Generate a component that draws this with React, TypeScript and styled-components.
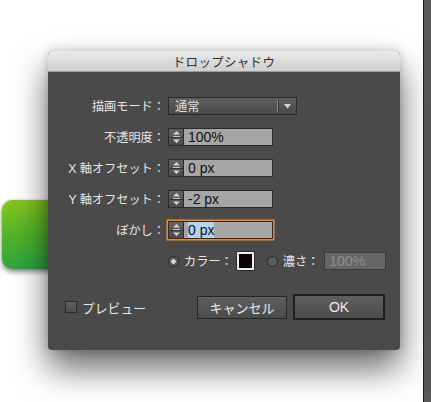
import React from "react";
import styled, { createGlobalStyle } from "styled-components";

const Global = createGlobalStyle`
  html, body { margin: 0; padding: 0; background: #ffffff; }
  body { font-family: "Liberation Sans", "Noto Sans CJK JP", sans-serif; }
`;

const Page = styled.div`
  width: 431px;
  height: 402px;
  display: flex;
  overflow: hidden;
  background: #ffffff;
`;

const Canvas = styled.div`
  position: relative;
  flex: 1;
  height: 100%;
`;

const SideBar = styled.div`
  width: 7px;
  height: 100%;
  border-left: 1px solid #1e1e1e;
  background: #575757;
`;

const GreenShape = styled.div`
  position: absolute;
  left: 2px;
  top: 200px;
  width: 80px;
  height: 69px;
  border-radius: 10px;
  background: linear-gradient(172deg, #86c818 0%, #55b42a 45%, #21a044 100%);
  box-shadow: 0 3px 5px rgba(0, 0, 0, 0.45), 0 0 2px rgba(0, 0, 0, 0.2);
`;

const Dialog = styled.div`
  position: absolute;
  left: 48px;
  top: 51px;
  width: 352px;
  height: 299px;
  display: flex;
  flex-direction: column;
  border-radius: 5px 5px 4px 4px;
  background: #4a4a4a;
  box-shadow: 0 18px 34px rgba(0, 0, 0, 0.6), 0 0 10px rgba(0, 0, 0, 0.18);
  overflow: hidden;
`;

const TitleBar = styled.div`
  height: 21px;
  flex: none;
  display: flex;
  align-items: center;
  justify-content: center;
  background: linear-gradient(180deg, #ececec 0%, #d9d9d9 60%, #cfcfcf 100%);
  border-bottom: 1px solid #9a9a9a;
  box-sizing: border-box;
  font-family: "Noto Sans CJK JP", sans-serif;
  font-size: 12.5px;
  color: #2e2e2e;
  letter-spacing: 0.3px;
`;

const Body = styled.div`
  flex: 1;
  display: flex;
  flex-direction: column;
  padding-top: 25px;
`;

const Form = styled.div`
  display: grid;
  grid-template-columns: 117px auto;
  column-gap: 3px;
  row-gap: 13px;
  align-items: center;
`;

const Label = styled.div`
  height: 18px;
  display: flex;
  align-items: center;
  justify-content: flex-end;
  font-family: "Liberation Sans", "Noto Sans CJK JP", sans-serif;
  font-size: 12.2px;
  color: #e6e6e6;
  white-space: nowrap;
`;

const Select = styled.div`
  width: 129px;
  height: 18px;
  box-sizing: border-box;
  display: flex;
  align-items: center;
  border: 1px solid #2a2a2a;
  background: linear-gradient(180deg, #5e5e5e 0%, #4a4a4a 100%);
  font-family: "Noto Sans CJK JP", sans-serif;
  font-size: 12.2px;
  color: #dedede;
`;

const SelectText = styled.span`
  flex: 1;
  padding-left: 6px;
`;

const SelectSep = styled.span`
  width: 1px;
  height: 12px;
  background: #8a8a8a;
  border-right: 1px solid #333;
`;

const SelectArrow = styled.span`
  width: 17px;
  display: flex;
  justify-content: center;
`;

const Field = styled.div<{ $focus?: boolean }>`
  display: flex;
  width: 105px;
  height: 18px;
  box-shadow: ${(p) => (p.$focus ? "0 0 0 1.5px #f08a1c" : "none")};
`;

const Spin = styled.div`
  width: 15px;
  height: 18px;
  box-sizing: border-box;
  border: 1px solid #2a2a2a;
  border-right: none;
  background: linear-gradient(180deg, #626262 0%, #4c4c4c 100%);
  display: flex;
  align-items: center;
  justify-content: center;
`;

const Input = styled.div<{ $disabled?: boolean }>`
  flex: 1;
  height: 18px;
  box-sizing: border-box;
  border: 1px solid ${(p) => (p.$disabled ? "#3c3c3c" : "#2a2a2a")};
  background: ${(p) => (p.$disabled ? "#666666" : "#a6a6a6")};
  color: ${(p) => (p.$disabled ? "#8e8e8e" : "#111111")};
  font-family: "Liberation Sans", sans-serif;
  font-size: 14px;
  line-height: 16px;
  padding-left: 4px;
  display: flex;
  align-items: center;
  white-space: pre;
`;

const Selected = styled.span`
  background: #b3d3f5;
  color: #111;
`;

const ColorRow = styled.div`
  display: flex;
  align-items: center;
  height: 18px;
  margin-top: 13px;
  padding-left: 120px;
  font-family: "Noto Sans CJK JP", sans-serif;
  font-size: 12.2px;
  color: #e6e6e6;
`;

const Radio = styled.span<{ $on?: boolean }>`
  width: 11px;
  height: 11px;
  box-sizing: border-box;
  border-radius: 50%;
  border: 1px solid #2a2a2a;
  background: radial-gradient(circle, ${(p) => (p.$on ? "#d8d8d8 0 2px, #5c5c5c 2.5px" : "#5c5c5c 0")});
  margin-right: 5px;
  flex: none;
`;

const Swatch = styled.span`
  width: 17px;
  height: 18px;
  box-sizing: border-box;
  border: 2px solid #f2f2f2;
  outline: 1px solid #2a2a2a;
  background: #0c0505;
  margin-left: 4px;
  margin-right: 13px;
`;

const DisabledBox = styled.div`
  width: 62px;
  height: 18px;
  margin-left: 5px;
  display: flex;
`;

const ButtonRow = styled.div`
  display: flex;
  align-items: center;
  margin-top: 24px;
  padding: 0 15px 0 17px;
  height: 26px;
`;

const Check = styled.span`
  width: 12px;
  height: 12px;
  box-sizing: border-box;
  border: 1px solid #2a2a2a;
  background: linear-gradient(180deg, #616161, #4f4f4f);
  margin-right: 5px;
`;

const CheckLabel = styled.span`
  flex: 1;
  font-family: "Noto Sans CJK JP", sans-serif;
  font-size: 12.8px;
  color: #e6e6e6;
`;

const Button = styled.div<{ $default?: boolean }>`
  box-sizing: border-box;
  width: ${(p) => (p.$default ? "92px" : "90px")};
  height: ${(p) => (p.$default ? "26px" : "23px")};
  margin-left: ${(p) => (p.$default ? "6px" : "0")};
  border: ${(p) => (p.$default ? "2px solid #1f1f1f" : "1px solid #262626")};
  background: linear-gradient(180deg, #5f5f5f 0%, #4b4b4b 100%);
  display: flex;
  align-items: center;
  justify-content: center;
  font-family: "Liberation Sans", "Noto Sans CJK JP", sans-serif;
  font-size: ${(p) => (p.$default ? "14px" : "13px")};
  color: #ececec;
`;

const SpinIcon = () => (
  <svg width="13" height="16" viewBox="0 0 13 16">
    <path d="M6.5 2 L10 5.5 L3 5.5 Z" fill="#d4d4d4" />
    <rect x="3" y="7" width="7" height="1" fill="#c8c8c8" />
    <rect x="0" y="8" width="13" height="1" fill="#333" />
    <path d="M3 10.5 L10 10.5 L6.5 14 Z" fill="#d4d4d4" />
  </svg>
);

const Arrow = () => (
  <svg width="7" height="5" viewBox="0 0 7 5">
    <path d="M0 0 L7 0 L3.5 4.5 Z" fill="#d6d6d6" />
  </svg>
);

const rows: { label: string; value: string; focus?: boolean }[] = [
  { label: "不透明度：", value: "100%" },
  { label: "X 軸オフセット：", value: "0 px" },
  { label: "Y 軸オフセット：", value: "-2 px" },
  { label: "ぼかし：", value: "0 px", focus: true },
];

export default function App() {
  return (
    <Page>
      <Global />
      <Canvas>
        <GreenShape />
        <Dialog>
          <TitleBar>ドロップシャドウ</TitleBar>
          <Body>
            <Form>
              <Label>描画モード：</Label>
              <Select>
                <SelectText>通常</SelectText>
                <SelectSep />
                <SelectArrow>
                  <Arrow />
                </SelectArrow>
              </Select>
              {rows.map((r) => (
                <React.Fragment key={r.label}>
                  <Label>{r.label}</Label>
                  <Field $focus={r.focus}>
                    <Spin>
                      <SpinIcon />
                    </Spin>
                    <Input>
                      {r.focus ? <Selected>{r.value}</Selected> : r.value}
                    </Input>
                  </Field>
                </React.Fragment>
              ))}
            </Form>
            <ColorRow>
              <Radio $on />
              <span>カラー：</span>
              <Swatch />
              <Radio />
              <span>濃さ：</span>
              <DisabledBox>
                <Input $disabled>100%</Input>
              </DisabledBox>
            </ColorRow>
            <ButtonRow>
              <Check />
              <CheckLabel>プレビュー</CheckLabel>
              <Button>キャンセル</Button>
              <Button $default>OK</Button>
            </ButtonRow>
          </Body>
        </Dialog>
      </Canvas>
      <SideBar />
    </Page>
  );
}
